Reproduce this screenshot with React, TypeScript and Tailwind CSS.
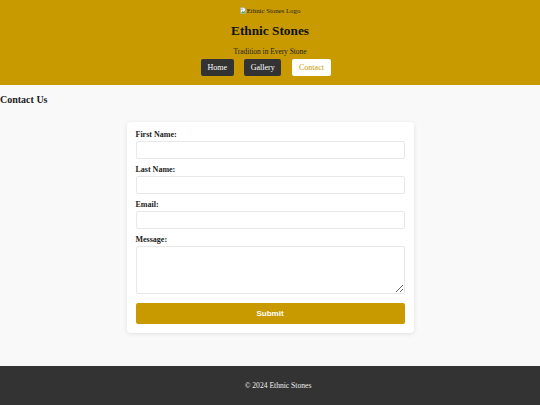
import React from "react";

const serif = { fontFamily: '"Liberation Serif", "Times New Roman", serif' };

const BrokenImage = () => (
    <svg width="6" height="7" viewBox="0 0 12 14" className="inline-block">
        <path d="M1 1h7l3 3v9H1z" fill="#f4f4f4" stroke="#9a9a9a" strokeWidth="1" />
        <path d="M2 12l3-4 2 2 2-3 1 5z" fill="#4caf50" />
        <circle cx="4" cy="4.5" r="1.3" fill="#64a0e0" />
    </svg>
);

const Field = ({ label, children }: { label: string; children: React.ReactNode }) => (
    <div className="flex flex-col">
        <label className="text-[8px] leading-[10px] font-bold text-[#222] mb-[1px]">{label}</label>
        {children}
    </div>
);

const inputCls = "w-full h-[18px] border border-[#e8e8e8] rounded-[2px] bg-white outline-none";

export default function App() {
    return (
        <div className="min-h-[405px] bg-[#f9f9f9] flex flex-col" style={serif}>
            <header className="bg-[#c89a00] h-[85px] flex flex-col items-center pt-[6px]">
                <div className="flex items-center gap-[1px] text-[6.8px] leading-[9px] text-[#222]">
                    <BrokenImage />
                    <span>Ethnic Stones Logo</span>
                </div>
                <h1 className="mt-[8px] text-[13.3px] leading-[16px] font-bold text-[#111]">Ethnic Stones</h1>
                <p className="mt-[8px] text-[7.4px] leading-[9px] text-[#222]">Tradition in Every Stone</p>
                <nav className="mt-[3px] mr-[8px] flex gap-[10.5px]">
                    <a className="h-[17px] px-[6.7px] flex items-center rounded-[2px] bg-[#333] text-white text-[8px]">Home</a>
                    <a className="h-[17px] px-[6.5px] flex items-center rounded-[2px] bg-[#333] text-white text-[8px]">Gallery</a>
                    <a className="h-[17px] px-[7.3px] flex items-center rounded-[2px] bg-white text-[#c89a00] text-[8px]">Contact</a>
                </nav>
            </header>

            <main className="flex-1 pb-[33px]">
                <h2 className="mt-[9px] text-[10px] leading-[12px] font-bold text-[#222]">Contact Us</h2>
                <form className="mt-[16px] mx-auto w-[287px] bg-white rounded-[4px] shadow-[0_1px_4px_rgba(0,0,0,0.1)] px-[9px] pt-[8px] pb-[9px] flex flex-col gap-[6px]">
                    <Field label="First Name:">
                        <input className={inputCls} />
                    </Field>
                    <Field label="Last Name:">
                        <input className={inputCls} />
                    </Field>
                    <Field label="Email:">
                        <input className={inputCls} type="email" />
                    </Field>
                    <Field label="Message:">
                        <textarea className="w-full h-[48px] border border-[#e8e8e8] rounded-[2px] bg-white outline-none block" />
                    </Field>
                    <button
                        type="submit"
                        className="mt-[3px] h-[21px] w-full rounded-[2px] bg-[#c89a00] text-white text-[8px] font-bold"
                        style={{ fontFamily: '"Liberation Sans", Arial, sans-serif' }}
                    >
                        Submit
                    </button>
                </form>
            </main>

            <footer className="bg-[#333] h-[39px] pl-[16px] flex items-center justify-center text-[7.6px] text-[#eee]">
                © 2024 Ethnic Stones
            </footer>
        </div>
    );
}
